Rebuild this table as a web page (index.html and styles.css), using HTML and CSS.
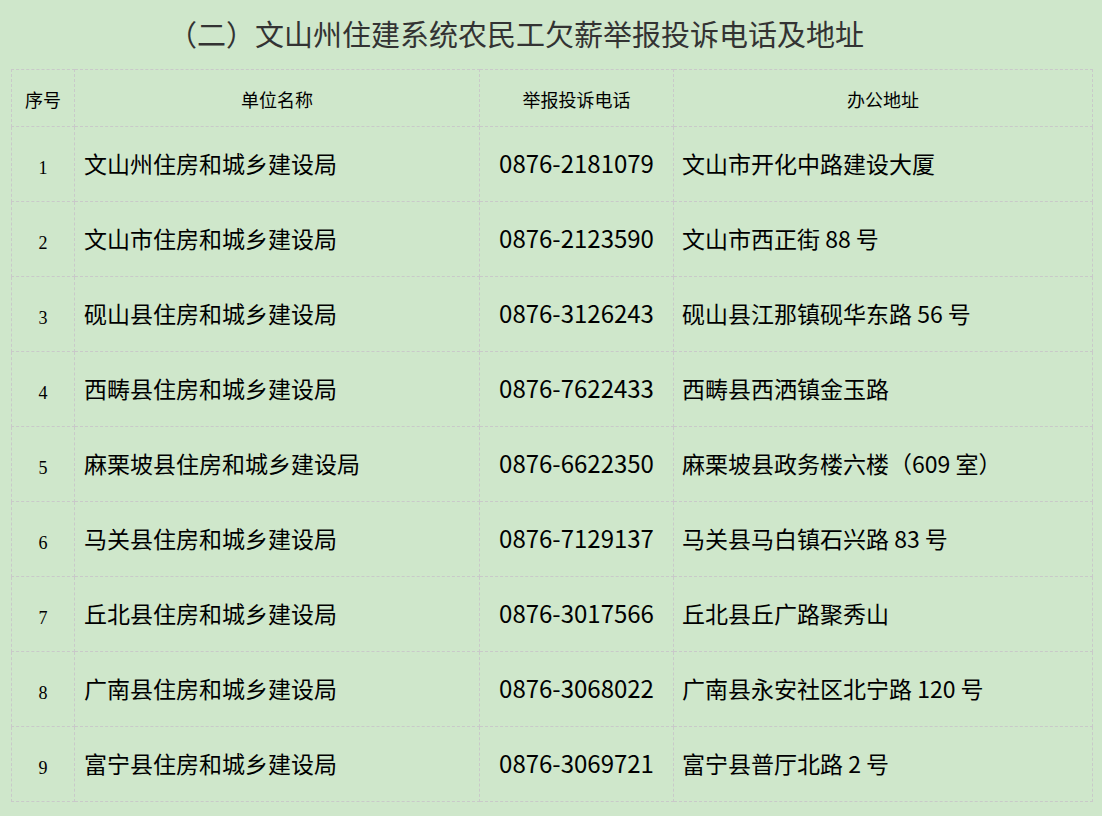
FILE: index.html
```html
<!DOCTYPE html>
<html lang="zh">
<head>
<meta charset="utf-8">
<link rel="stylesheet" href="styles.css">
</head>
<body>
<h1 class="title">（二）文山州住建系统农民工欠薪举报投诉电话及地址</h1>
<table class="tbl">
  <colgroup>
    <col class="c-no"><col class="c-name"><col class="c-tel"><col class="c-addr">
  </colgroup>
  <thead>
    <tr><th>序号</th><th>单位名称</th><th>举报投诉电话</th><th>办公地址</th></tr>
  </thead>
  <tbody>
    <tr><td class="no">1</td><td class="name">文山州住房和城乡建设局</td><td class="tel">0876-2181079</td><td class="addr">文山市开化中路建设大厦</td></tr>
    <tr><td class="no">2</td><td class="name">文山市住房和城乡建设局</td><td class="tel">0876-2123590</td><td class="addr">文山市西正街 88 号</td></tr>
    <tr><td class="no">3</td><td class="name">砚山县住房和城乡建设局</td><td class="tel">0876-3126243</td><td class="addr">砚山县江那镇砚华东路 56 号</td></tr>
    <tr><td class="no">4</td><td class="name">西畴县住房和城乡建设局</td><td class="tel">0876-7622433</td><td class="addr">西畴县西洒镇金玉路</td></tr>
    <tr><td class="no">5</td><td class="name">麻栗坡县住房和城乡建设局</td><td class="tel">0876-6622350</td><td class="addr">麻栗坡县政务楼六楼（609 室）</td></tr>
    <tr><td class="no">6</td><td class="name">马关县住房和城乡建设局</td><td class="tel">0876-7129137</td><td class="addr">马关县马白镇石兴路 83 号</td></tr>
    <tr><td class="no">7</td><td class="name">丘北县住房和城乡建设局</td><td class="tel">0876-3017566</td><td class="addr">丘北县丘广路聚秀山</td></tr>
    <tr><td class="no">8</td><td class="name">广南县住房和城乡建设局</td><td class="tel">0876-3068022</td><td class="addr">广南县永安社区北宁路 120 号</td></tr>
    <tr><td class="no">9</td><td class="name">富宁县住房和城乡建设局</td><td class="tel">0876-3069721</td><td class="addr">富宁县普厅北路 2 号</td></tr>
  </tbody>
</table>
</body>
</html>
```

FILE: styles.css
```css
html, body {
  margin: 0;
  padding: 0;
  background: #cfe7cb;
}
body {
  padding: 0 11px 0 11px;
  font-family: "Noto Sans CJK SC", "Noto Sans", sans-serif;
  color: #000;
}
.title {
  margin: 0;
  height: 69px;
  box-sizing: border-box;
  padding: 13px 0 0 157px;
  font-size: 29px;
  line-height: 40px;
  font-weight: normal;
  color: #333;
  white-space: nowrap;
}
.tbl {
  width: 1081px;
  border-collapse: collapse;
  table-layout: fixed;
}
.c-no { width: 63px; }
.c-name { width: 405px; }
.c-tel { width: 194px; }
.c-addr { width: 419px; }
.tbl th, .tbl td {
  border: 1px dashed #c9c9c9;
  padding: 0;
  vertical-align: middle;
  white-space: nowrap;
}
.tbl th {
  height: 54px;
  padding-top: 2px;
  font-size: 18px;
  line-height: 24px;
  font-weight: normal;
  text-align: center;
}
.tbl td {
  height: 71px;
  padding-bottom: 3px;
  font-size: 23px;
  line-height: 30px;
}
.tbl td.no {
  text-align: center;
  font-family: "Liberation Serif", serif;
  font-size: 18px;
  line-height: 38px;
  vertical-align: bottom;
  padding-bottom: 14px;
  height: 60px;
}
.tbl td.name { padding-left: 9px; }
.tbl td.tel { text-align: center; font-size: 24px; }
.tbl td.addr { padding-left: 8px; }
```
